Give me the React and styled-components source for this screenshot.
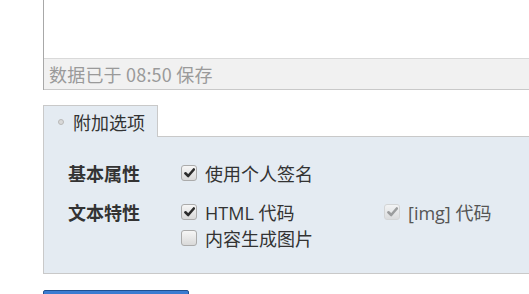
import styled, { createGlobalStyle } from "styled-components";

const GlobalStyle = createGlobalStyle`
  html, body {
    margin: 0;
    padding: 0;
    background: #fff;
    overflow: hidden;
  }
  body {
    font-family: "Segoe UI", "Open Sans", "Noto Sans CJK SC", sans-serif;
    font-size: 18px;
    color: #333;
  }
`;

const Page = styled.div`
  width: 640px;
  margin-left: 43px;
`;

const Editor = styled.div`
  border-left: 1px solid #a8a8a8;
`;

const EditArea = styled.div`
  height: 58px;
  background: #fff;
`;

const StatusBar = styled.div`
  height: 30px;
  line-height: 30px;
  padding-left: 5px;
  background: #f1f1f1;
  border-top: 1px solid #d9d9d9;
  border-bottom: 1px solid #c9c9c9;
  color: #9a9a9a;
  font-family: "Noto Sans CJK SC", sans-serif;
  letter-spacing: 0.2px;
  white-space: nowrap;
`;

const Tabs = styled.div`
  display: flex;
  margin-top: 15px;
`;

const Tab = styled.div`
  display: flex;
  align-items: center;
  gap: 9px;
  height: 32px;
  padding: 0 12px 0 14px;
  background: #e4ebf2;
  border: 1px solid #c9c9c9;
  border-bottom: none;
  font-family: "Noto Sans CJK SC", sans-serif;
  color: #333;
  box-sizing: border-box;
  white-space: nowrap;
  flex-shrink: 0;
`;

const Dot = styled.span`
  width: 6px;
  height: 6px;
  border-radius: 50%;
  background: #d9d9d9;
  border: 1px solid #b8b8b8;
  box-sizing: border-box;
  flex-shrink: 0;
`;

const TabFill = styled.div`
  flex: 1;
  border-bottom: 1px solid #c9c9c9;
`;

const Panel = styled.div`
  background: #e4ebf2;
  border-left: 1px solid #c9c9c9;
  border-bottom: 1px solid #c9c9c9;
  padding: 23px 0 22px 24px;
  display: flex;
  flex-direction: column;
  gap: 13px;
`;

const Row = styled.div`
  display: flex;
  align-items: flex-start;
`;

const Label = styled.div`
  width: 113px;
  line-height: 26px;
  font-weight: bold;
  font-family: "Noto Sans CJK SC", sans-serif;
  color: #333;
`;

const Options = styled.div`
  display: flex;
  flex-wrap: wrap;
  width: 420px;
`;

const Option = styled.label`
  display: flex;
  align-items: center;
  gap: 8px;
  width: 203px;
  height: 26px;
  white-space: nowrap;
  font-family: "Segoe UI", "Open Sans", "Noto Sans CJK SC", sans-serif;
  color: ${(p) => (p.$disabled ? "#555" : "#333")};
`;

const Box = styled.span`
  width: 16px;
  height: 16px;
  border: 1px solid ${(p) => (p.$disabled ? "#d0d0d0" : "#ababab")};
  border-radius: 3px;
  background: linear-gradient(#f6f6f6, #d9d9d9);
  box-sizing: border-box;
  display: flex;
  align-items: center;
  justify-content: center;
  opacity: ${(p) => (p.$disabled ? 0.8 : 1)};
  flex-shrink: 0;
`;

const Check = ({ color }) => (
  <svg width="11" height="10" viewBox="0 0 11 10">
    <path d="M1.4 5.3 L4.2 8 L9.8 1.5" fill="none" stroke={color} strokeWidth="2.6" strokeLinecap="round" strokeLinejoin="round" />
  </svg>
);

const Button = styled.div`
  margin-top: 16px;
  width: 146px;
  height: 30px;
  box-sizing: border-box;
  background: linear-gradient(#3b7dd3, #2a66b8);
  border: 1px solid #1f4f90;
  border-radius: 2px;
`;

function Checkbox({ checked, disabled, children }) {
  return (
    <Option $disabled={disabled}>
      <Box $disabled={disabled}>{checked && <Check color={disabled ? "#8a8a8a" : "#2b2b2b"} />}</Box>
      {children}
    </Option>
  );
}

export default function App() {
  return (
    <>
      <GlobalStyle />
      <Page>
        <Editor>
          <EditArea />
          <StatusBar>数据已于 08:50 保存</StatusBar>
        </Editor>
        <Tabs>
          <Tab>
            <Dot />
            附加选项
          </Tab>
          <TabFill />
        </Tabs>
        <Panel>
          <Row>
            <Label>基本属性</Label>
            <Options>
              <Checkbox checked>使用个人签名</Checkbox>
            </Options>
          </Row>
          <Row>
            <Label>文本特性</Label>
            <Options>
              <Checkbox checked>HTML 代码</Checkbox>
              <Checkbox checked disabled>[img] 代码</Checkbox>
              <Checkbox>内容生成图片</Checkbox>
            </Options>
          </Row>
        </Panel>
        <Button />
      </Page>
    </>
  );
}
